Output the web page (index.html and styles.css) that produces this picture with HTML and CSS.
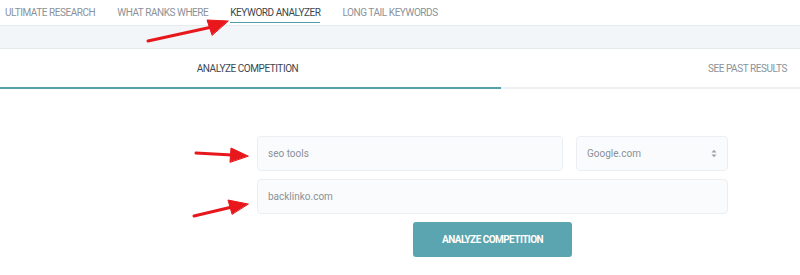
FILE: index.html
```html
<!DOCTYPE html>
<html>
<head>
<meta charset="utf-8">
<link rel="stylesheet" href="styles.css">
</head>
<body>
<div class="page">
  <nav class="tabs">
    <span class="tab">ULTIMATE RESEARCH</span>
    <span class="tab">WHAT RANKS WHERE</span>
    <span class="tab active">KEYWORD ANALYZER</span>
    <span class="tab">LONG TAIL KEYWORDS</span>
  </nav>
  <div class="band"></div>
  <div class="subtabs">
    <div class="sub sub-main">ANALYZE COMPETITION</div>
    <div class="sub sub-past">SEE PAST RESULTS</div>
  </div>
  <form class="form">
    <div class="row">
      <div class="field">seo tools</div>
      <div class="field select">Google.com
        <svg class="updown" width="6" height="9" viewBox="0 0 6 9"><path d="M0.5 3.5L3 0.8 5.5 3.5Z M0.5 5.5L3 8.2 5.5 5.5Z" fill="#9aa2a9"/></svg>
      </div>
    </div>
    <div class="field wide">backlinko.com</div>
    <div class="btn">ANALYZE COMPETITION</div>
  </form>
  <svg class="arrows" width="800" height="275" viewBox="0 0 800 275">
    <g fill="#e8171b" stroke="#e8171b" stroke-linecap="round">
      <line x1="148" y1="41" x2="212" y2="27" stroke-width="3"/>
      <polygon points="228,21 207,20 212,35" stroke-width="1"/>
      <line x1="196" y1="153" x2="232" y2="155" stroke-width="3"/>
      <polygon points="248,156 231,148 230,162" stroke-width="1"/>
      <line x1="194" y1="216" x2="232" y2="207" stroke-width="3"/>
      <polygon points="248,204 228,200 232,214" stroke-width="1"/>
    </g>
  </svg>
</div>
</body>
</html>
```

FILE: styles.css
```css
* { box-sizing: border-box; }
body {
  margin: 0;
  background: #ffffff;
  font-family: Roboto, "Liberation Sans", sans-serif;
}
.page {
  position: relative;
  width: 800px;
  height: 275px;
  overflow: hidden;
}
.tabs {
  display: flex;
  gap: 22px;
  padding-left: 5px;
  height: 26px;
  border-bottom: 1px solid #e6ebee;
}
.tab {
  font-size: 10px;
  color: #8a9299;
  line-height: 12px;
  padding-top: 7px;
  height: 24px;
  letter-spacing: -0.45px;
}
.tab.active {
  color: #3c4650;
  border-bottom: 1px solid #4f9aa5;
  height: 23px;
}
.band {
  height: 23px;
  background: #f2f6f8;
  border-bottom: 1px solid #e5eaed;
}
.subtabs {
  display: flex;
  height: 40px;
}
.sub {
  font-size: 10px;
  line-height: 12px;
  padding-top: 14px;
  letter-spacing: -0.45px;
}
.sub-main {
  width: 501px;
  text-align: center;
  color: #3c4650;
  border-bottom: 2px solid #56a0aa;
  padding-right: 6px;
}
.sub-past {
  flex: 1;
  text-align: right;
  padding-right: 13px;
  color: #8a9299;
  border-bottom: 2px solid #eef1f3;
}
.form {
  width: 471px;
  margin: 47px 0 0 257px;
  display: flex;
  flex-direction: column;
  gap: 8px;
}
.row {
  display: grid;
  grid-template-columns: 306px 152px;
  gap: 13px;
}
.field {
  height: 35px;
  background: #fafbfc;
  border: 1px solid #eceff1;
  border-radius: 4px;
  padding-left: 10px;
  font-size: 10px;
  line-height: 33px;
  color: #8a9199;
}
.select {
  display: flex;
  justify-content: space-between;
  align-items: center;
  padding-right: 10px;
}
.updown { display: block; }
.btn {
  margin-left: 156px;
  width: 159px;
  height: 35px;
  background: #5aa5b0;
  border-radius: 3px;
  color: #ffffff;
  font-size: 10px;
  font-weight: 700;
  text-align: center;
  line-height: 35px;
  letter-spacing: -0.55px;
}
.arrows {
  position: absolute;
  left: 0;
  top: 0;
  pointer-events: none;
}
```
